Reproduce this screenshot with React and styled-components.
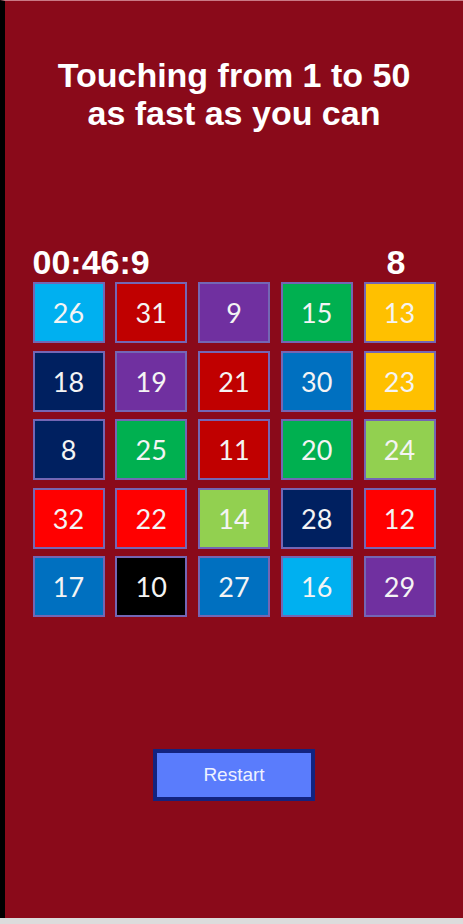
import React from "react";
import styled, { createGlobalStyle } from "styled-components";

const GlobalStyle = createGlobalStyle`
  html, body {
    margin: 0;
    padding: 0;
    background: #dcdcdc;
  }
  * { box-sizing: border-box; }
`;

const Page = styled.div`
  height: 918px;
  border-left: 5px solid #000;
  border-top: 1px solid #c97a86;
  background: #8a0a1a;
  display: flex;
  flex-direction: column;
  align-items: center;
  font-family: "Liberation Sans", Arial, sans-serif;
`;

const Title = styled.h1`
  margin: 55px 0 0;
  color: #ffffff;
  font-size: 34px;
  line-height: 38px;
  font-weight: 700;
  text-align: center;
`;

const Header = styled.div`
  width: 403px;
  margin-top: 111px;
  display: flex;
  justify-content: space-between;
  align-items: baseline;
  color: #ffffff;
  font-size: 34px;
  line-height: 38px;
  font-weight: 700;
`;

const Timer = styled.span``;

const Score = styled.span`
  margin-right: 30px;
`;

const Board = styled.div`
  margin-top: 1px;
  display: grid;
  grid-template-columns: repeat(5, 72px);
  grid-auto-rows: 61px;
  column-gap: 10.75px;
  row-gap: 7.5px;
`;

const Tile = styled.div`
  background: ${(p) => p.$bg};
  border: 2px solid #7466b4;
  display: flex;
  align-items: center;
  justify-content: center;
  color: #f4f4f4;
  font-family: Lato, "Open Sans", sans-serif;
  font-size: 27px;
  line-height: 1;
`;

const RestartButton = styled.button`
  margin-top: 132px;
  width: 162px;
  height: 52px;
  border: 4px solid #13237f;
  background: #5a7cfc;
  color: #eef2ff;
  font-family: "Liberation Sans", Arial, sans-serif;
  font-size: 19px;
  padding: 0;
  cursor: pointer;
`;

const C = {
  lb: "#00b0f0",
  dr: "#c00000",
  pu: "#7030a0",
  gr: "#00b050",
  go: "#ffc000",
  nv: "#002060",
  bl: "#0070c0",
  lg: "#92d050",
  rd: "#ff0000",
  bk: "#000000",
};

const tiles = [
  [26, C.lb], [31, C.dr], [9, C.pu], [15, C.gr], [13, C.go],
  [18, C.nv], [19, C.pu], [21, C.dr], [30, C.bl], [23, C.go],
  [8, C.nv], [25, C.gr], [11, C.dr], [20, C.gr], [24, C.lg],
  [32, C.rd], [22, C.rd], [14, C.lg], [28, C.nv], [12, C.rd],
  [17, C.bl], [10, C.bk], [27, C.bl], [16, C.lb], [29, C.pu],
];

export default function App() {
  return (
    <>
      <GlobalStyle />
      <Page>
        <Title>
          Touching from 1 to 50
          <br />
          as fast as you can
        </Title>
        <Header>
          <Timer>00:46:9</Timer>
          <Score>8</Score>
        </Header>
        <Board>
          {tiles.map(([n, bg]) => (
            <Tile key={n} $bg={bg}>
              {n}
            </Tile>
          ))}
        </Board>
        <RestartButton>Restart</RestartButton>
      </Page>
    </>
  );
}
